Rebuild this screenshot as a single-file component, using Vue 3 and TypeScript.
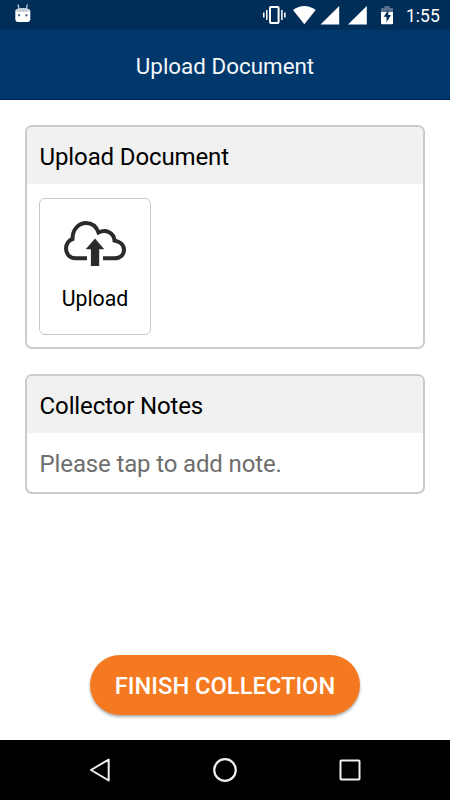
<script setup lang="ts">
import { ref } from 'vue'

const title = ref<string>('Upload Document')
const time = ref<string>('1:55')
</script>

<template>
  <div class="screen">
    <div class="status">
      <svg class="droid" width="18" height="20" viewBox="0 0 18 20">
        <path d="M4.200 2 5 6M13.200 2 12.400 6" stroke="#b9c9da" stroke-width="1.300" stroke-linecap="round" />
        <path d="M1.300 8Q1.500 5.500 8.800 5.300Q16 5.500 16.300 8V16.500Q16 19 13.500 19H4Q1.700 19 1.300 16.500Z" fill="#fff" />
        <path d="M1.500 8Q2 5.300 8.800 5.100Q15.600 5.300 16.100 8Q13 9 8.800 9Q4.500 9 1.500 8Z" fill="#c3d0dc" />
        <path d="M4 11.200h2.200v2H4zM11.400 11.200h2.200v2h-2.200z" fill="#58718f" />
      </svg>
      <svg class="icons" width="140" height="30" viewBox="260 0 140 30">
        <g fill="none" stroke="#fff">
          <rect x="270" y="7" width="8.600" height="16" rx="1" stroke-width="2" />
          <path d="M266.800 10v10M281.900 10v10" stroke-width="1.500" />
          <path d="M263.800 12.400v5.200M284.900 12.400v5.200" stroke-width="1.500" />
        </g>
        <path d="M293 10.100Q304.300 2 315.700 10.100L304.300 24.200Z" fill="#fff" />
        <path d="M320.500 24.600 339.200 6V24.600ZM348 24.600 366.800 6V24.600Z" fill="#fff" />
        <path d="M381 12V9Q381 8 382 8H384.500V6H389.500V8H392Q393 8 393 9V12Z" fill="#58718f" />
        <path d="M381 12H393V23.200Q393 24.200 392 24.200H382Q381 24.200 381 23.200Z" fill="#fff" />
        <path d="M388.500 9.800 383.600 16.800H386.500V22.200L391 14.900H388.200Z" fill="#002e58" />
      </svg>
      <span class="time">{{ time }}</span>
    </div>
    <header class="appbar">{{ title }}</header>

    <main class="content">
      <section class="card documents">
        <h2>Upload Document</h2>
        <div class="files">
          <button class="tile">
            <svg width="66" height="48" viewBox="0 0 66 48">
              <path d="M25 38.300H13.500C6 38.300 4 32 4 28.500C4 24 7 20 10.500 19C10.500 9 17 3 24 3C30 3 34.500 7 36.500 12.500C44 8.500 52 13 52.500 20.500C58 21.500 62 25 62 30C62 35 58 38.300 53 38.300H41" fill="none" stroke="#2b2b2b" stroke-width="4" />
              <path d="M33 18.500 42.300 29.300H37.200V46H28.900V29.300H23.700Z" fill="#2b2b2b" />
            </svg>
            <span>Upload</span>
          </button>
        </div>
      </section>
      <section class="card notes">
        <h2>Collector Notes</h2>
        <p>Please tap to add note.</p>
      </section>
    </main>

    <footer class="actions">
      <button class="finish">FINISH COLLECTION</button>
    </footer>

    <nav class="navbar">
      <svg width="450" height="60" viewBox="0 0 450 60" fill="none" stroke="#f0f0f0" stroke-width="2">
        <path d="M91 30 108.700 19.500V40.500Z" stroke-linejoin="round" />
        <circle cx="225" cy="30" r="10.800" stroke-width="2.200" />
        <rect x="340.500" y="20.500" width="19" height="19" rx=".8" />
      </svg>
    </nav>
  </div>
</template>

<style>
body {
  margin: 0;
}
</style>

<style scoped>
.screen {
  width: 450px;
  height: 800px;
  display: flex;
  flex-direction: column;
  overflow: hidden;
  background: #fff;
  color: #000;
  font-family: Roboto, sans-serif;
}
.status {
  flex: none;
  height: 30px;
  display: flex;
  align-items: center;
  background: #002e58;
  color: #fff;
}
.droid {
  margin: 0 0 5px 14px;
}
.icons {
  margin-left: auto;
}
.time {
  width: 44px;
  padding-left: 6px;
  padding-top: 2px;
  font-size: 17.5px;
  line-height: 28px;
}
.appbar {
  flex: none;
  box-sizing: border-box;
  height: 70px;
  padding-top: 1px;
  border-bottom: 1px solid #00205a;
  background: #00386c;
  color: #f4f7fa;
  font-size: 22.4px;
  line-height: 70px;
  text-align: center;
}
.content {
  flex: 1;
  display: flex;
  flex-direction: column;
  gap: 25px;
  padding: 25px 25px 0;
}
.card {
  box-sizing: border-box;
  border: 2px solid #cbcbcb;
  border-radius: 7px;
  overflow: hidden;
}
.documents {
  height: 224px;
}
.notes {
  height: 120px;
}
.card h2 {
  margin: 0;
  height: 57px;
  padding-left: 12.6px;
  background: #f1f1f1;
  font-size: 24px;
  font-weight: 400;
  letter-spacing: -0.13px;
  line-height: 60px;
}
.card p {
  margin: 0;
  padding-left: 12.6px;
  color: #6e6e6e;
  font-size: 24px;
  letter-spacing: -0.14px;
  line-height: 63px;
}
.files {
  padding: 14px 12px;
}
.tile {
  box-sizing: border-box;
  width: 112px;
  height: 137px;
  padding: 21px 0 0;
  display: flex;
  flex-direction: column;
  align-items: center;
  gap: 18px;
  border: 1px solid #c8c8c8;
  border-radius: 6px;
  background: #fff;
  color: #000;
  font: 400 21.3px/26px Roboto, sans-serif;
}
.actions {
  flex: none;
  display: flex;
  justify-content: center;
  padding-bottom: 25px;
}
.finish {
  width: 270px;
  height: 60px;
  padding: 3px 0 0;
  border: 0;
  border-radius: 30px;
  background: #f47920;
  box-shadow: 0 2px 3px rgba(0, 0, 0, 0.32);
  color: #fff;
  font: 500 23.7px/57px Roboto, sans-serif;
  white-space: nowrap;
}
.navbar {
  flex: none;
  height: 60px;
  background: #000;
}
.navbar svg {
  display: block;
}
</style>
